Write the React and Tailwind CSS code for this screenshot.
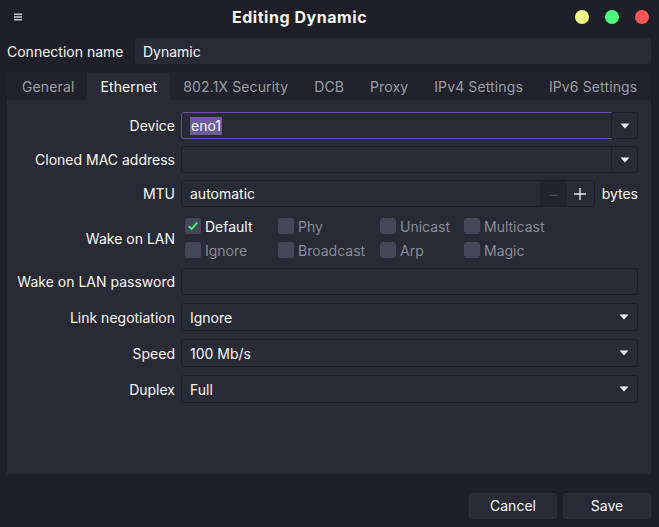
import React from "react";

const tabs = ["General", "Ethernet", "802.1X Security", "DCB", "Proxy", "IPv4 Settings", "IPv6 Settings"];

function Arrow() {
  return (
    <svg width="10" height="6" viewBox="0 0 10 6" className="block">
      <path d="M0.5 0.5 L9.5 0.5 L5 5.5 Z" fill="#f0f0f0" />
    </svg>
  );
}

function Label({ children }) {
  return <div className="w-[168px] shrink-0 text-right">{children}</div>;
}

function Row({ label, className = "", children }) {
  return (
    <div className={"flex items-center gap-[6px] " + className}>
      <Label>{label}</Label>
      <div className="flex-1 flex h-full">{children}</div>
    </div>
  );
}

function Combo({ value }) {
  return (
    <div className="flex-1 flex items-center bg-[#282a36] border border-[#1d1e27] rounded-[3px] pl-[8px]">
      <span className="flex-1">{value}</span>
      <span className="w-[26px] flex justify-center">
        <Arrow />
      </span>
    </div>
  );
}

function EditCombo({ active, children }) {
  return (
    <div className="flex-1 flex bg-[#282a36] border border-[#1d1e27] rounded-[3px]">
      <div
        className={
          "flex-1 flex items-center pl-[8px] rounded-l-[2px] " +
          (active ? "outline outline-1 outline-[#6c4fa3]" : "")
        }
      >
        {children}
      </div>
      <div className="w-[26px] flex items-center justify-center border-l border-[#1d1e27]">
        <Arrow />
      </div>
    </div>
  );
}

function Check({ label, checked }) {
  return (
    <div className="flex items-center gap-[4px]">
      <span className="w-[16px] h-[16px] rounded-[3px] bg-[#44475a] flex items-center justify-center">
        {checked && (
          <svg width="12" height="12" viewBox="0 0 12 12">
            <path d="M1.8 6.2 L4.6 9 L10.2 2.6" stroke="#50fa7b" strokeWidth="1.8" fill="none" />
          </svg>
        )}
      </span>
      <span className={checked ? "text-[#f8f8f2]" : "text-[#8a8c96]"}>{label}</span>
    </div>
  );
}

export default function App() {
  return (
    <div className="w-[659px] h-[527px] bg-[#1e1f29] flex flex-col font-['Inter','Liberation_Sans',sans-serif] text-[14px] text-[#f8f8f2] overflow-hidden">
      {/* title bar */}
      <div className="h-[34px] flex items-center shrink-0">
        <div className="w-[28px] pl-[14px]">
          <svg width="8" height="8" viewBox="0 0 8 8" className="block">
            <rect x="0" y="0.5" width="8" height="1.6" fill="#c4c4c8" />
            <rect x="0" y="3.2" width="8" height="1.6" fill="#c4c4c8" />
            <rect x="0" y="5.9" width="8" height="1.6" fill="#c4c4c8" />
          </svg>
        </div>
        <div className="flex-1 text-center font-bold text-[16px] tracking-[0.55px] pr-[4px]">Editing Dynamic</div>
        <div className="flex gap-[16px] pr-[10px]">
          <span className="w-[14px] h-[14px] rounded-full bg-[#f1fa8c]" />
          <span className="w-[14px] h-[14px] rounded-full bg-[#50fa7b]" />
          <span className="w-[14px] h-[14px] rounded-full bg-[#ff5555]" />
        </div>
      </div>

      {/* connection name */}
      <div className="mt-[4px] h-[26px] flex items-center pl-[7px] pr-[8px] shrink-0">
        <div className="w-[128px]">Connection name</div>
        <div className="flex-1 h-full flex items-center bg-[#282a36] rounded-[3px] pl-[8px]">Dynamic</div>
      </div>

      {/* tabs */}
      <div className="mt-[8px] ml-[7px] w-[644px] shrink-0">
        <div className="h-[28px] bg-[#21222c] flex pl-[2px] pt-[1px] tracking-[0.12px] overflow-hidden">
          {tabs.map((t) => (
            <div
              key={t}
              className={
                "px-[13px] flex items-center shrink-0 whitespace-nowrap " +
                (t === "Ethernet" ? "bg-[#282a36] text-[#f8f8f2]" : "text-[#9c9ea6]")
              }
            >
              {t}
            </div>
          ))}
        </div>

        <div className="h-[374px] bg-[#282a36] pr-[13px] pt-[12px] flex flex-col">
          <Row label="Device" className="h-[27px]">
            <EditCombo active>
              <span className="bg-[#6e5a9b] px-[1px] leading-[18px]">eno1</span>
            </EditCombo>
          </Row>
          <Row label="Cloned MAC address" className="h-[27px] mt-[7px]">
            <EditCombo />
          </Row>
          <Row label="MTU" className="h-[27px] mt-[7px]">
            <div className="flex-1 flex bg-[#282a36] border border-[#1d1e27] rounded-[3px]">
              <div className="flex-1 flex items-center pl-[8px]">automatic</div>
              <div className="w-[27px] bg-[#22232d] flex items-center justify-center text-[#4a4c58] text-[16px]">–</div>
              <div className="w-[27px] flex items-center justify-center">
                <svg width="12" height="12" viewBox="0 0 12 12">
                  <path d="M6 0 V12 M0 6 H12" stroke="#f0f0f0" strokeWidth="1.3" />
                </svg>
              </div>
            </div>
            <div className="ml-[7px] flex items-center">bytes</div>
          </Row>

          <div className="flex items-center gap-[6px] mt-[7px] h-[48px]">
            <Label>Wake on LAN</Label>
            <div className="pl-[4px] grid grid-cols-[93px_102px_84px_auto] grid-rows-[24px_24px] items-center">
              <Check label="Default" checked />
              <Check label="Phy" />
              <Check label="Unicast" />
              <Check label="Multicast" />
              <Check label="Ignore" />
              <Check label="Broadcast" />
              <Check label="Arp" />
              <Check label="Magic" />
            </div>
          </div>

          <Row label="Wake on LAN password" className="h-[27px] mt-[6px]">
            <div className="flex-1 bg-[#282a36] border border-[#1d1e27] rounded-[3px]" />
          </Row>
          <Row label="Link negotiation" className="h-[28px] mt-[8px]">
            <Combo value="Ignore" />
          </Row>
          <Row label="Speed" className="h-[28px] mt-[8px]">
            <Combo value="100 Mb/s" />
          </Row>
          <Row label="Duplex" className="h-[28px] mt-[8px]">
            <Combo value="Full" />
          </Row>
        </div>
      </div>

      {/* buttons */}
      <div className="mt-[19px] flex justify-end gap-[6px] pr-[8px] shrink-0">
        <button className="w-[88px] h-[26px] bg-[#282a36] border border-[#2e303d] rounded-[3px] leading-[22px]">Cancel</button>
        <button className="w-[88px] h-[26px] bg-[#282a36] border border-[#2e303d] rounded-[3px] leading-[22px]">Save</button>
      </div>
    </div>
  );
}
